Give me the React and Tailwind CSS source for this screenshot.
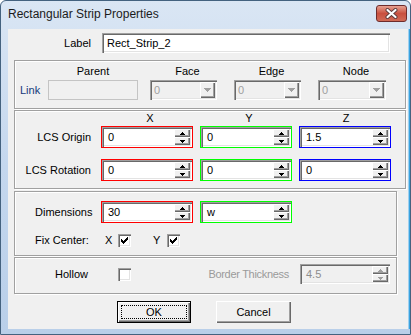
import React from 'react';

const sunken =
  'shadow-[inset_1px_1px_0_#a0a0a0,inset_2px_2px_0_#696969,inset_-1px_-1px_0_#ffffff,inset_-2px_-2px_0_#e3e3e3]';
const raised =
  'shadow-[inset_1px_1px_0_#ffffff,inset_-1px_-1px_0_#696969,inset_-2px_-2px_0_#a0a0a0]';
const group = 'border border-[#a0a0a0] shadow-[1px_1px_0_#ffffff,inset_1px_1px_0_#ffffff]';

function Arrow({ up, color }) {
  return (
    <svg width="5" height="3" viewBox="0 0 5 3" shapeRendering="crispEdges">
      <path d={up ? 'M2 0 H3 V1 H4 V2 H5 V3 H0 V2 H1 V1 H2 Z' : 'M0 0 H5 V1 H4 V2 H3 V3 H2 V2 H1 V1 H0 Z'} fill={color} />
    </svg>
  );
}

function SpinButtons({ disabled }) {
  const c = disabled ? '#a0a0a0' : '#000000';
  return (
    <div className="flex flex-col w-[16px] h-full">
      <div className={`flex-1 flex items-center justify-center bg-[#f0f0f0] ${raised}`}>
        <Arrow up color={c} />
      </div>
      <div className={`flex-1 flex items-center justify-center bg-[#f0f0f0] ${raised}`}>
        <Arrow color={c} />
      </div>
    </div>
  );
}

function Edit({ value, disabled }) {
  return (
    <div
      className={`flex h-[20px] w-[90px] p-[2px] ${sunken} ${
        disabled ? 'bg-[#f0f0f0] text-[#8d8d8d]' : 'bg-white text-black'
      }`}
    >
      <div className="flex-1 pl-[4px] flex items-center">{value}</div>
      <SpinButtons disabled={disabled} />
    </div>
  );
}

function Spin({ value, frame }) {
  return (
    <div className={`border ${frame}`}>
      <Edit value={value} />
    </div>
  );
}

function Combo({ width }) {
  return (
    <div className={`flex h-[20px] p-[2px] bg-[#f0f0f0] ${sunken} ${width}`}>
      <div className="flex-1 pl-[2px] flex items-center text-[#a0a0a0]">0</div>
      <div className={`w-[15px] flex items-center justify-center bg-[#f0f0f0] ${raised}`}>
        <svg width="7" height="4" viewBox="0 0 7 4" shapeRendering="crispEdges">
          <path d="M0 0 H7 V1 H6 V2 H5 V3 H4 V4 H3 V3 H2 V2 H1 V1 H0 Z" fill="#a0a0a0" />
        </svg>
      </div>
    </div>
  );
}

function Check({ checked }) {
  const rows = [
    [6, 1],
    [5, 2],
    [0, 1, 4, 3],
    [0, 2, 3, 3],
    [0, 5],
    [1, 3],
    [2, 1],
  ];
  return (
    <div className={`w-[13px] h-[13px] bg-white flex items-center justify-center ${sunken}`}>
      {checked && (
        <svg width="7" height="7" viewBox="0 0 7 7" shapeRendering="crispEdges">
          {rows.map((r, y) =>
            r.length === 2 ? (
              <rect key={y} x={r[0]} y={y} width={r[1]} height="1" fill="#000" />
            ) : (
              <g key={y}>
                <rect x={r[0]} y={y} width={r[1]} height="1" fill="#000" />
                <rect x={r[2]} y={y} width={r[3]} height="1" fill="#000" />
              </g>
            )
          )}
        </svg>
      )}
    </div>
  );
}

export default function App() {
  return (
    <div className="w-[411px] h-[335px] overflow-hidden bg-white font-['Liberation_Sans',Arial,sans-serif] text-[11px] leading-[13px] text-black">
      <div className="h-full flex flex-col rounded-t-[6px] border border-[#44627f] bg-gradient-to-b from-[#dae6f4] via-[#c4d7ee] to-[#b9cfe9]">
        {/* Title bar */}
        <div className="h-[28px] flex items-start justify-between">
          <div className="h-[27px] pl-[7px] flex items-center text-[12px] text-[#1b1b1b]">
            Rectangular Strip Properties
          </div>
          <div className="mt-[4px] mr-[3px] w-[31px] h-[17px] rounded-[3px] border border-[#6e2c2c] bg-gradient-to-b from-[#e6a091] via-[#c9503f] to-[#d06a56] flex items-center justify-center">
            <svg width="13" height="11" viewBox="0 0 13 11">
              <path d="M2.5 2 L10.5 9 M10.5 2 L2.5 9" stroke="#5a3a3a" strokeWidth="4" strokeLinecap="round" />
              <path d="M2.5 2 L10.5 9 M10.5 2 L2.5 9" stroke="#ffffff" strokeWidth="2.2" strokeLinecap="round" />
            </svg>
          </div>
        </div>

        <div className="flex-1 flex">
          <div className="w-[7px]" />
          {/* Client area */}
          <div className="w-[400px] h-[300px] bg-[#f0f0f0] flex flex-col pl-[6px]">
            {/* Label */}
            <div className="mt-[4px] flex items-center h-[20px]">
              <div className="w-[77px] text-right">Label</div>
              <div className={`ml-[11px] w-[288px] h-[20px] bg-white flex items-center pl-[5px] ${sunken}`}>
                Rect_Strip_2
              </div>
            </div>

            {/* Link group */}
            <div className={`mt-[7px] w-[392px] h-[49px] pt-[3px] flex ${group}`}>
              <div className="w-[33px] flex flex-col">
                <div className="h-[14px]" />
                <div className="mt-[2px] h-[20px] pl-[5px] flex items-center text-[#15397a]">Link</div>
              </div>
              <div className="w-[90px] flex flex-col">
                <div className="h-[14px] flex items-center justify-center">Parent</div>
                <div className="mt-[2px] h-[20px] border border-[#c4c4c4] bg-[#f0f0f0]" />
              </div>
              <div className="ml-[12px] w-[67px] flex flex-col">
                <div className="h-[14px] pl-[8px] flex items-center justify-center">Face</div>
                <div className="mt-[2px]">
                  <Combo width="w-[67px]" />
                </div>
              </div>
              <div className="ml-[17px] w-[67px] flex flex-col">
                <div className="h-[14px] pl-[8px] flex items-center justify-center">Edge</div>
                <div className="mt-[2px]">
                  <Combo width="w-[67px]" />
                </div>
              </div>
              <div className="ml-[17px] w-[68px] flex flex-col">
                <div className="h-[14px] pl-[8px] flex items-center justify-center">Node</div>
                <div className="mt-[2px]">
                  <Combo width="w-[68px]" />
                </div>
              </div>
            </div>

            {/* LCS group */}
            <div className={`mt-[1px] w-[392px] h-[79px] pt-[1px] flex flex-col ${group}`}>
              <div className="h-[13px] flex">
                <div className="w-[86px]" />
                <div className="w-[92px] pl-[6px] text-center">X</div>
                <div className="ml-[7px] w-[92px] pl-[6px] text-center">Y</div>
                <div className="ml-[7px] w-[92px] pl-[2px] text-center">Z</div>
              </div>
              <div className="mt-[1px] flex items-center">
                <div className="w-[76px] text-right">LCS Origin</div>
                <div className="ml-[10px]">
                  <Spin value="0" frame="border-[#ff0000]" />
                </div>
                <div className="ml-[7px]">
                  <Spin value="0" frame="border-[#00ff00]" />
                </div>
                <div className="ml-[7px]">
                  <Spin value="1.5" frame="border-[#0000ff]" />
                </div>
              </div>
              <div className="mt-[11px] flex items-center">
                <div className="w-[76px] text-right">LCS Rotation</div>
                <div className="ml-[10px]">
                  <Spin value="0" frame="border-[#ff0000]" />
                </div>
                <div className="ml-[7px]">
                  <Spin value="0" frame="border-[#00ff00]" />
                </div>
                <div className="ml-[7px]">
                  <Spin value="0" frame="border-[#0000ff]" />
                </div>
              </div>
            </div>

            {/* Dimensions group */}
            <div className={`mt-[2px] w-[383px] h-[65px] pt-[9px] flex flex-col ${group}`}>
              <div className="flex items-center">
                <div className="pl-[20px] w-[86px]">Dimensions</div>
                <Spin value="30" frame="border-[#ff0000]" />
                <div className="ml-[7px]">
                  <Spin value="w" frame="border-[#00ff00]" />
                </div>
              </div>
              <div className="mt-[11px] h-[13px] flex items-center">
                <div className="pl-[20px] w-[90px]">Fix Center:</div>
                <div className="w-[13px]">X</div>
                <Check checked />
                <div className="ml-[22px] w-[14px]">Y</div>
                <Check checked />
              </div>
            </div>

            {/* Hollow group */}
            <div className={`mt-[1px] w-[383px] h-[37px] pt-[6px] pr-[6px] flex items-start ${group}`}>
              <div className="h-[20px] flex items-center w-full">
                <div className="w-[73px] text-right">Hollow</div>
                <div className="ml-[30px]">
                  <Check />
                </div>
                <div className="ml-auto text-[#9a9a9a] tracking-[-0.3px]">Border Thickness</div>
                <div className="ml-[11px]">
                  <Edit value="4.5" disabled />
                </div>
              </div>
            </div>

            {/* Buttons */}
            <div className="mt-[7px] flex pl-[103px]">
              <div className="w-[74px] h-[22px] border border-black">
                <div className={`h-full p-[3px] bg-[#f0f0f0] ${raised}`}>
                  <div className="h-full border border-dotted border-black flex items-center justify-center">
                    OK
                  </div>
                </div>
              </div>
              <div
                className={`ml-[25px] w-[75px] h-[22px] bg-[#f0f0f0] flex items-center justify-center ${raised}`}
              >
                Cancel
              </div>
            </div>
          </div>
          <div className="w-[1px] bg-[#9fd0ef]" />
          <div className="w-[1px] bg-[#3aa3e0]" />
        </div>
        <div className="h-[5px]" />
      </div>
    </div>
  );
}
